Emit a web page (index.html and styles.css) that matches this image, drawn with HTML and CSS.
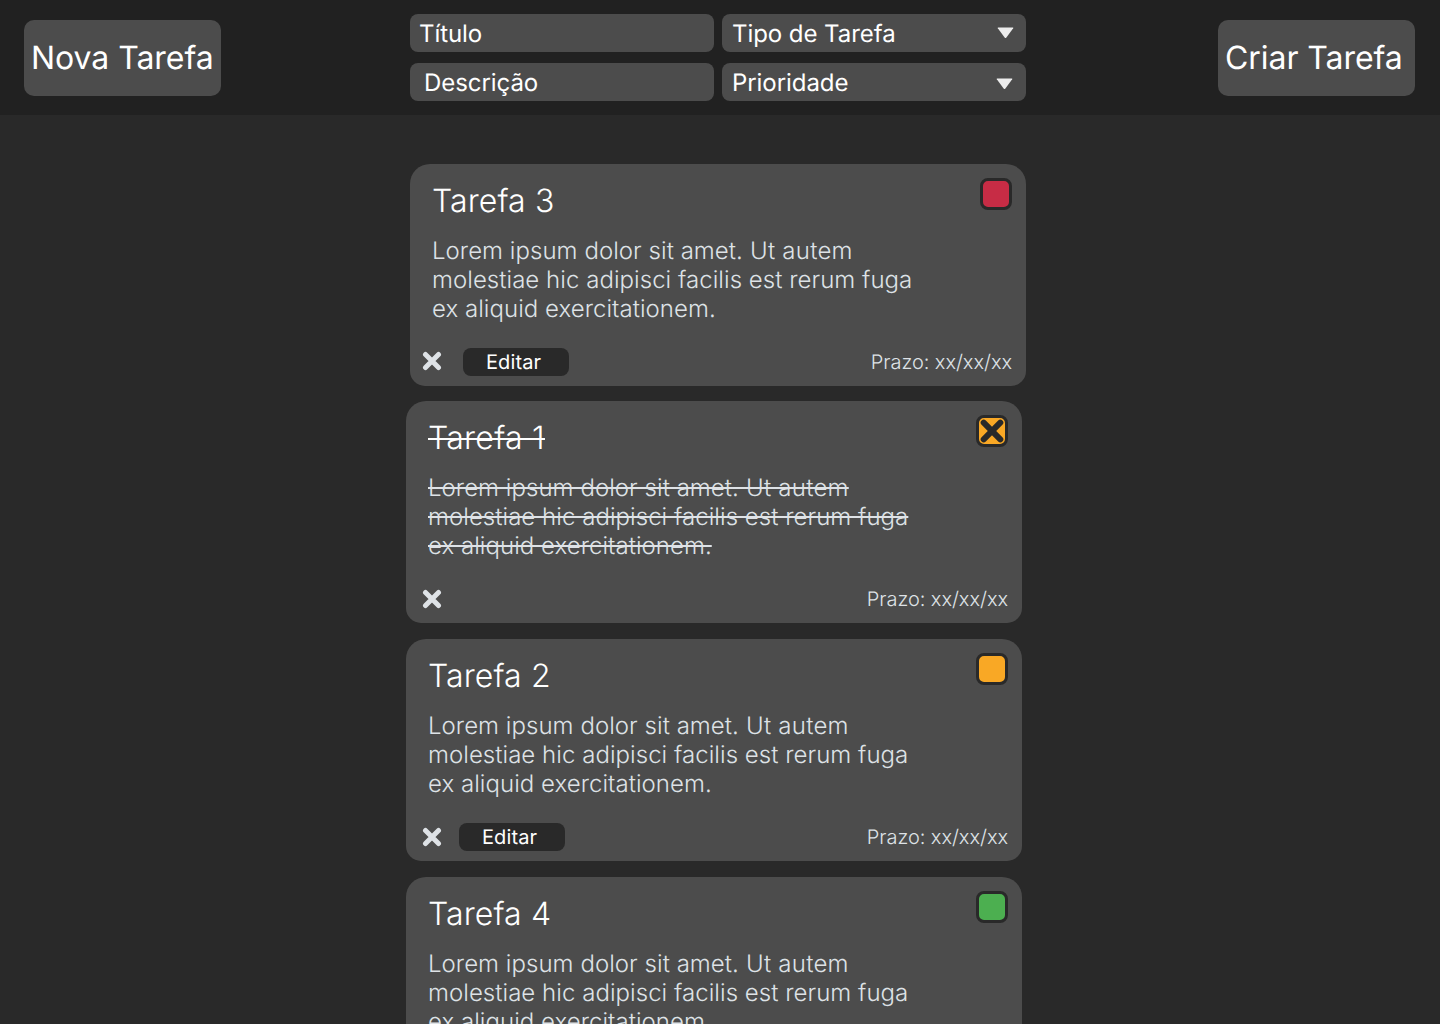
FILE: index.html
```html
<!DOCTYPE html>
<html lang="pt-BR">
<head>
<meta charset="utf-8">
<title>Tarefas</title>
<link rel="stylesheet" href="styles.css">
</head>
<body>
<header class="topbar">
  <button class="action">Nova Tarefa</button>
  <form class="fields">
    <div class="field title-field">Título</div>
    <div class="field select">Tipo de Tarefa
      <svg class="caret" width="17" height="12" viewBox="0 0 17 12"><path d="M1.2 .5h14.6q.8.1.4.8L9.2 10.7q-.7.7-1.4 0L.8 1.3Q.4.6 1.2.5z"/></svg>
    </div>
    <div class="field indented">Descrição</div>
    <div class="field select lower">Prioridade
      <svg class="caret" width="17" height="12" viewBox="0 0 17 12"><path d="M1.2 .5h14.6q.8.1.4.8L9.2 10.7q-.7.7-1.4 0L.8 1.3Q.4.6 1.2.5z"/></svg>
    </div>
  </form>
  <button class="action">Criar Tarefa</button>
</header>
<main class="tasks">
  <article class="card first">
    <div class="head"><h2 class="title"><span>Tarefa 3</span></h2><span class="status red"></span></div>
    <p class="text">Lorem ipsum dolor sit amet<span class="loose">. Ut autem</span><br>molestiae hic adipisci facilis est rerum fuga<br>ex aliquid exercitationem.</p>
    <footer class="foot">
      <svg class="remove" width="20" height="20" viewBox="0 0 20 20"><path d="M3.5 3.5l13 13M16.5 3.5l-13 13"/></svg>
      <button class="edit">Editar</button>
      <span class="due">Prazo: xx/xx/xx</span>
    </footer>
  </article>
  <article class="card done">
    <div class="head"><h2 class="title"><span>Tarefa 1</span></h2><span class="status orange"><svg class="check" width="26" height="26" viewBox="0 0 26 26"><path d="M4.7 4.7l16.6 16.6M21.3 4.7L4.7 21.3"/></svg></span></div>
    <p class="text">Lorem ipsum dolor sit amet<span class="loose">. Ut autem</span><br>molestiae hic adipisci facilis est rerum fuga<br>ex aliquid exercitationem.</p>
    <footer class="foot">
      <svg class="remove" width="20" height="20" viewBox="0 0 20 20"><path d="M3.5 3.5l13 13M16.5 3.5l-13 13"/></svg>
      <span class="due">Prazo: xx/xx/xx</span>
    </footer>
  </article>
  <article class="card">
    <div class="head"><h2 class="title"><span>Tarefa 2</span></h2><span class="status orange"></span></div>
    <p class="text">Lorem ipsum dolor sit amet<span class="loose">. Ut autem</span><br>molestiae hic adipisci facilis est rerum fuga<br>ex aliquid exercitationem.</p>
    <footer class="foot">
      <svg class="remove" width="20" height="20" viewBox="0 0 20 20"><path d="M3.5 3.5l13 13M16.5 3.5l-13 13"/></svg>
      <button class="edit">Editar</button>
      <span class="due">Prazo: xx/xx/xx</span>
    </footer>
  </article>
  <article class="card">
    <div class="head"><h2 class="title"><span>Tarefa 4</span></h2><span class="status green"></span></div>
    <p class="text">Lorem ipsum dolor sit amet<span class="loose">. Ut autem</span><br>molestiae hic adipisci facilis est rerum fuga<br>ex aliquid exercitationem.</p>
  </article>
</main>
</body>
</html>
```
FILE: styles.css
```css
* { box-sizing: border-box; }

body {
  margin: 0;
  height: 1024px;
  overflow: hidden;
  background: #292929;
  color: #fff;
  font-family: Inter, sans-serif;
  text-rendering: geometricPrecision;
}

.topbar {
  display: grid;
  grid-template-columns: 197px 616px 197px;
  column-gap: 189px;
  align-items: center;
  height: 115px;
  padding: 0 0 0 24px;
  background: #212121;
}

.topbar .action:last-child { margin-left: 3px; }

.action {
  width: 197px;
  height: 76px;
  margin: 1px 0 0;
  padding: 0 0 1px 7px;
  border: 0;
  border-radius: 10px;
  background: #4c4c4c;
  color: #fff;
  font: 400 32px/39px Inter, sans-serif;
  letter-spacing: -0.06px;
  text-align: left;
  white-space: nowrap;
  text-rendering: geometricPrecision;
}

.fields {
  display: grid;
  grid-template-columns: 304px 304px;
  gap: 11px 8px;
}

.field {
  display: flex;
  align-items: center;
  height: 38px;
  padding: 1px 12px 0 10px;
  border-radius: 8px;
  background: #4c4c4c;
  font-size: 24px;
  font-weight: 400;
  line-height: 29px;
  letter-spacing: -0.06px;
}

.title-field { padding-left: 9px; }
.indented { padding-left: 14px; }

.select { justify-content: space-between; }
.caret { fill: #ececec; margin-top: -2px; }
.lower { padding-right: 13px; }
.lower .caret { margin-top: 2px; }

.tasks {
  display: flex;
  flex-direction: column;
  gap: 16px;
  width: 616px;
  margin-left: 406px;
  padding-top: 49px;
}

.card {
  display: flex;
  flex-direction: column;
  flex: none;
  height: 222px;
  padding: 14px 14px 10px 22px;
  border-radius: 20px 20px 15px 15px;
  background: #4c4c4c;
}

.first { margin: 0 -4px -1px 4px; }

.head {
  display: flex;
  justify-content: space-between;
}

.title {
  margin: 3px 0 0;
  font-size: 32px;
  font-weight: 300;
  line-height: 39px;
  letter-spacing: 0.1px;
}

.done .title { letter-spacing: 0.27px; }

.status {
  width: 32px;
  height: 32px;
  border: 3px solid #292929;
  border-radius: 8px;
}

.red { background: #c72c45; }
.orange { background: #f9a825; }
.green { background: #4caf50; }

.check {
  display: block;
  fill: none;
  stroke: #292929;
  stroke-width: 6;
  stroke-linecap: round;
}

.text {
  margin: 16px 0 0;
  color: #dee2e6;
  font-size: 24px;
  font-weight: 300;
  line-height: 29px;
  letter-spacing: 0.045px;
}

.loose { letter-spacing: 0.25px; }

.done .title span {
  text-decoration: line-through;
  text-decoration-thickness: 2.4px;
}

.done .text {
  text-decoration: line-through;
  text-decoration-thickness: 1.8px;
}

.foot {
  display: flex;
  align-items: center;
  height: 28px;
  margin: auto 0 0 -6px;
}

.first .foot { margin-left: -10px; }

.remove {
  fill: none;
  stroke: #dee2e6;
  stroke-width: 5;
  stroke-linecap: round;
}

.first .remove { margin-top: -2px; }

.edit {
  width: 106px;
  height: 28px;
  margin-left: 17px;
  padding: 0 0 0 23px;
  border: 0;
  border-radius: 8px;
  background: #292929;
  color: #fff;
  font: 400 20px/24px Inter, sans-serif;
  letter-spacing: 0.1px;
  text-align: left;
  text-rendering: geometricPrecision;
}

.first .edit { margin-left: 21px; }

.due {
  margin-left: auto;
  color: #dee2e6;
  font-size: 20px;
  font-weight: 300;
  line-height: 24px;
  letter-spacing: -0.06px;
}
```
